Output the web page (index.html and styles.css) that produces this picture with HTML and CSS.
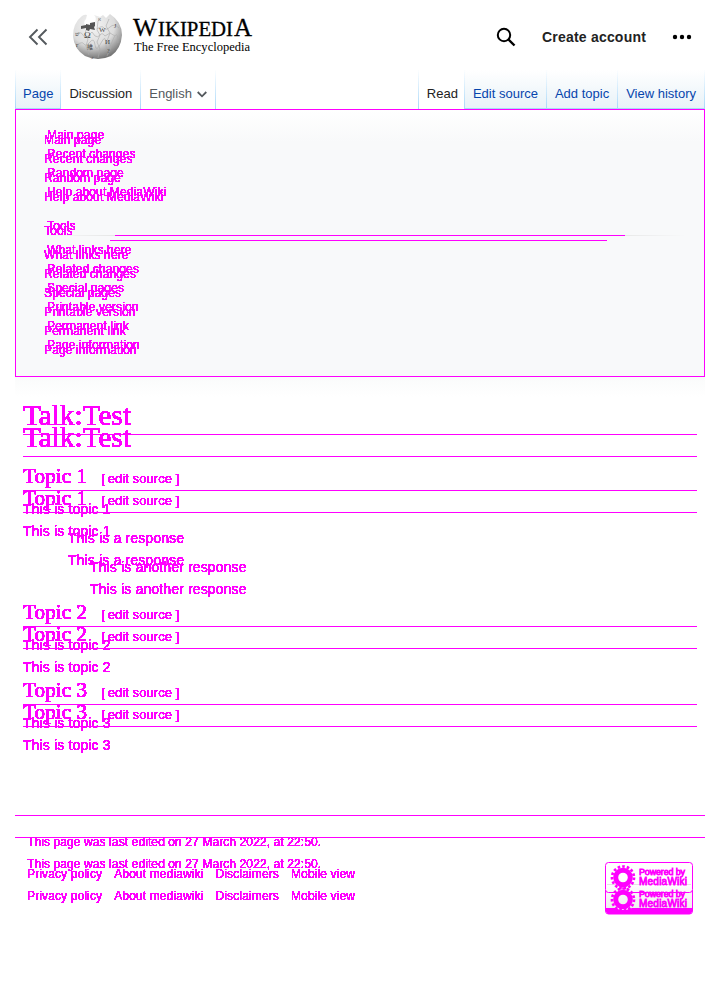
FILE: index.html
```html
<!DOCTYPE html>
<html lang="en">
<head>
<meta charset="utf-8">
<title>Talk:Test</title>
<link rel="stylesheet" href="styles.css">
</head>
<body>
<svg class="defs" width="0" height="0" aria-hidden="true">
  <filter id="solid" x="0" y="0" width="100%" height="100%" color-interpolation-filters="sRGB">
    <feComponentTransfer><feFuncA type="linear" slope="20" intercept="-1.5"/></feComponentTransfer>
  </filter>
</svg>
<header class="header">
  <svg class="collapse" width="20" height="18" viewBox="0 0 20 18"><path d="M9.500 1.500 2 9l7.500 7.500M18.500 1.500 11 9l7.500 7.500" fill="none" stroke="#54595d" stroke-width="1.9"/></svg>
  <svg class="globe" width="50" height="46" viewBox="0 0 50 46">
    <defs><radialGradient id="g" cx=".4" cy=".25" r=".75"><stop offset="0" stop-color="#f5f5f5"/><stop offset=".6" stop-color="#dcdcdc"/><stop offset="1" stop-color="#777"/></radialGradient></defs>
    <path d="M9 2Q12 0 14 1L13 5Q10 8 12 11L22 8Q24 3 21 1L27 3 30 1 33 4 37 0Q49 8 49 21 48 35 38 42 25 48 12 42 1 35 0 22 0 9 9 2Z" fill="url(#g)"/>
    <path d="M8 12l5-1 0-1 4 1 0-2 5-1v4l-1 1 1 3-5-1-1 2-3-1v-2l-5 1z" fill="#555"/>
    <path d="M3 20q5-3 7 1t5 1l4-4 3 4q3 2 5-1t5 1l5-3 5 3M4 31q5-4 7-1t6-2 5 3 6-2 5 2 6-3 6 1M13 16l-1 4 3 5-2 7 3 9M25 7l-1 9 3 5-3 7 3 7-2 9M36 5l-3 7 4 7-3 8 4 6-4 9M24 15q5-4 7-1t6-1 9 1" fill="none" stroke="#aaa" stroke-width=".6"/>
    <g class="glyphs"><text x="11" y="24" font-size="9">Ω</text><text x="26" y="18" font-size="7">W</text><text x="32" y="30" font-size="7">И</text><text x="2" y="22" font-size="6">ש</text><text x="25" y="7" font-size="5">א</text><text x="41" y="14" font-size="6">J</text><text class="cjk" x="14" y="35" font-size="6">維</text><text x="34" y="39" font-size="6">?</text><text x="3" y="33" font-size="6">г</text><text x="18" y="44" font-size="5">ر</text></g>
  </svg>
  <svg class="wordmark" width="122" height="42" viewBox="0 0 122 42">
    <g stroke="#000" stroke-width=".3"><text x="1" y="24" font-size="25" textLength="24" lengthAdjust="spacingAndGlyphs">W</text><text x="26" y="24" font-size="20" textLength="75" lengthAdjust="spacingAndGlyphs">IKIPEDI</text><text x="102" y="24" font-size="25" textLength="18" lengthAdjust="spacingAndGlyphs">A</text></g>
    <text x="2" y="39" font-size="12.5" textLength="116" lengthAdjust="spacingAndGlyphs">The Free Encyclopedia</text>
  </svg>
  <div class="tools">
    <svg width="20" height="20" viewBox="0 0 20 20"><circle cx="8" cy="8" r="6.200" fill="none" stroke="#000" stroke-width="2"/><path d="m12.500 12.500 6 6" stroke="#000" stroke-width="2.400"/></svg>
    <a class="create">Create account</a>
    <svg width="20" height="6" viewBox="0 0 20 6"><circle cx="3" cy="3" r="2.200"/><circle cx="10" cy="3" r="2.200"/><circle cx="17" cy="3" r="2.200"/></svg>
  </div>
</header>
<nav class="tabs">
  <a class="tab first">Page</a><a class="tab active">Discussion</a><a class="tab active lang">English <svg width="10" height="7" viewBox="0 0 10 7"><path d="m.7 1 4.300 4.300L9.300 1" fill="none" stroke="#54595d" stroke-width="1.800"/></svg></a>
  <span class="spacer"></span>
  <a class="tab first read active">Read</a><a class="tab">Edit source</a><a class="tab">Add topic</a><a class="tab">View history</a>
</nav>
<aside class="panel">
  <div class="stack menus">
    <div class="menu">
      <ul><li>Main page</li><li>Recent changes</li><li>Random page</li><li>Help about MediaWiki</li></ul>
      <h3>Tools</h3><div class="rule"><i></i></div>
      <ul><li>What links here</li><li>Related changes</li><li>Special pages</li><li>Printable version</li><li>Permanent link</li><li>Page information</li></ul>
    </div>
    <div class="menu shifted">
      <ul><li>Main page</li><li>Recent changes</li><li>Random page</li><li>Help about MediaWiki</li></ul>
      <h3>Tools</h3><div class="rule"><i></i></div>
      <ul><li>What links here</li><li>Related changes</li><li>Special pages</li><li>Printable version</li><li>Permanent link</li><li>Page information</li></ul>
    </div>
  </div>
</aside>
<div class="fade"></div>
<main class="stack content">
  <article>
    <h1>Talk:Test</h1>
    <h2>Topic 1<span>[ <b>edit source</b> ]</span></h2><p>This is topic 1</p><p class="reply">This is a response</p><p class="reply deep">This is another response</p>
    <h2>Topic 2<span>[ <b>edit source</b> ]</span></h2><p>This is topic 2</p>
    <h2>Topic 3<span>[ <b>edit source</b> ]</span></h2><p>This is topic 3</p>
  </article>
  <article class="lower">
    <h1>Talk:Test</h1>
    <h2>Topic 1<span>[ <b>edit source</b> ]</span></h2><p>This is topic 1</p><p class="reply">This is a response</p><p class="reply deep">This is another response</p>
    <h2>Topic 2<span>[ <b>edit source</b> ]</span></h2><p>This is topic 2</p>
    <h2>Topic 3<span>[ <b>edit source</b> ]</span></h2><p>This is topic 3</p>
  </article>
</main>
<footer class="stack footer">
  <div class="foot"><p>This page was last edited on 27 March 2022, at 22:50.</p><p class="links"><a>Privacy policy</a><a>About mediawiki</a><a>Disclaimers</a><a>Mobile view</a></p></div>
  <div class="foot lower"><p>This page was last edited on 27 March 2022, at 22:50.</p><p class="links"><a>Privacy policy</a><a>About mediawiki</a><a>Disclaimers</a><a>Mobile view</a></p></div>
  <svg class="badge" width="88" height="53" viewBox="0 0 88 53">
    <defs><linearGradient id="b" x2="0" y2="1"><stop offset="0" stop-color="#fff"/><stop offset="1" stop-color="#eee"/></linearGradient></defs>
    <rect x="1" y="22" width="86" height="24" fill="url(#b)"/>
    <path d="M2 22.500H86" stroke="#e4e4e4"/>
    <g fill="none" stroke="#f0f"><rect x=".5" y=".5" width="87" height="30" rx="3"/><path d="M.5 28V49q0 3 3 3h81q3 0 3-3V28"/></g>
    <path d="M1 46H10Q18 50 27 46H87V50L85 52H3L1 50Z" fill="#f0f"/>
    <g fill="none" stroke="#f0f"><circle cx="18" cy="15.500" r="7.300" stroke-width="5"/><circle cx="18" cy="15.500" r="11" stroke-width="2.700" stroke-dasharray="2.600 2.007"/><circle cx="18" cy="37.500" r="7.300" stroke-width="5"/><circle cx="18" cy="37.500" r="11" stroke-width="2.700" stroke-dasharray="2.600 2.007"/></g>
    <g class="badge-text"><text x="34" y="13" font-size="9" textLength="46">Powered by</text><text x="34" y="23" font-size="10" textLength="48">MediaWiki</text><text x="34" y="35" font-size="9" textLength="46">Powered by</text><text x="34" y="45" font-size="10" textLength="48">MediaWiki</text></g>
  </svg>
</footer>
</body>
</html>
```
FILE: styles.css
```css
* { box-sizing: border-box; }
body { margin: 0; padding: 0 15px; background: #fff; color: #222; font-family: "Liberation Sans", Arial, sans-serif; font-size: 14px; }
h1, h2, h3, p, ul { margin: 0; padding: 0; font-weight: normal; list-style: none; }
.defs { position: absolute; }
.header { display: flex; align-items: flex-start; height: 70px; }
.collapse { margin: 28px 0 0 13px; }
.globe { margin: 14px 0 0 25px; }
.globe text { fill: #444; font-family: "Liberation Serif", serif; }
.globe .cjk { font-family: "Noto Sans CJK TC", sans-serif; }
.wordmark { margin: 12px 0 0 9px; font-family: "Liberation Serif", serif; }
.tools { display: flex; align-items: center; gap: 26px; margin: 27px 13px 0 auto; height: 20px; }
.create { font-weight: bold; font-size: 14px; letter-spacing: .2px; }
.tabs { display: flex; height: 39px; }
.spacer { flex: 1; }
.tab { padding: 15px 8px 0; height: 39px; font-size: 13px; line-height: 18px; color: #0645ad; white-space: nowrap; border-right: 1px solid; border-bottom: 1px solid #a7d7f9; border-image: linear-gradient(#fff, #a7d7f9) 1; background: linear-gradient(#fff, #e8f2f8); }
.tab.first { border-left: 1px solid; padding-left: 7px; padding-right: 7px; }
.tab.read { padding-left: 8px; padding-right: 6px; }
.tab.active { border-bottom: 0; background: #fff; color: #222; }
.tab.lang { color: #54595d; }
.tab.lang svg { margin-left: 2px; }
.stack { display: grid; }
.stack > * { grid-area: 1 / 1; }
.panel { height: 268px; border: 1px solid #f0f; background: linear-gradient(#fff, #f8f9fa 32px); }
.menus { background: linear-gradient(90deg, transparent, #e4e4e4 12%, #e4e4e4 88%, transparent) 30px 125px / 640px 1px no-repeat; }
.menu { color: #f0f; font-size: 12px; line-height: 19px; letter-spacing: .13px; padding: 16px 0 0 31px; height: 241px; filter: url(#solid); }
.menu h3 { font-size: 12px; line-height: 19px; margin-top: 15px; }
.rule { display: flex; height: 1px; margin: -1px 0 5px -10px; }
.rule i { width: 510px; margin-left: 78px; background: #f0f; }
.shifted { transform: translate(-3px, 5px); }
.shifted .rule i { width: 497px; margin-left: 76px; }
.fade { height: 20px; background: linear-gradient(#fafbfb, #fff); }
.content { padding: 0 8px; height: 418px; }
article { color: #f0f; filter: url(#solid); height: 380px; letter-spacing: .14px; }
.lower { transform: translateY(22px); }
h1, h2 { font-family: "Liberation Serif", serif; border-bottom: 1px solid #f0f; -webkit-text-stroke: .15px #f0f; }
h1 { font-size: 28.800px; line-height: 37px; height: 38px; letter-spacing: .2px; }
h2 { font-size: 21px; line-height: 27px; height: 28px; margin-top: 28px; }
h2 span { font: 13px "Liberation Sans", sans-serif; margin-left: 14px; letter-spacing: .08px; -webkit-text-stroke: 0; }
h2 b { font-weight: normal; margin-left: -1px; }
article p { line-height: 22px; margin-top: 7px; height: 22px; }
article p.reply { margin: 7px 0 0 45px; }
article p.deep { margin-left: 67px; }
article p:not(.reply) + h2 { margin-top: 21px; }
article .deep + h2 { margin-top: 21px; }
.footer { height: 120px; }
.foot { height: 75px; color: #f0f; border-top: 1px solid #f0f; padding: 17px 12px 0; font-size: 12px; letter-spacing: .1px; filter: url(#solid); }
.foot:first-child p:first-child { clip-path: inset(5px 0 0 0); }
.foot p { line-height: 18px; height: 18px; }
.foot .links { display: flex; gap: 12px; margin-top: 14px; letter-spacing: .13px; }
.badge { justify-self: end; margin: 47px 12px 0 0; }
.badge-text { fill: #f0f; stroke: #f0f; stroke-width: .8px; }
```
